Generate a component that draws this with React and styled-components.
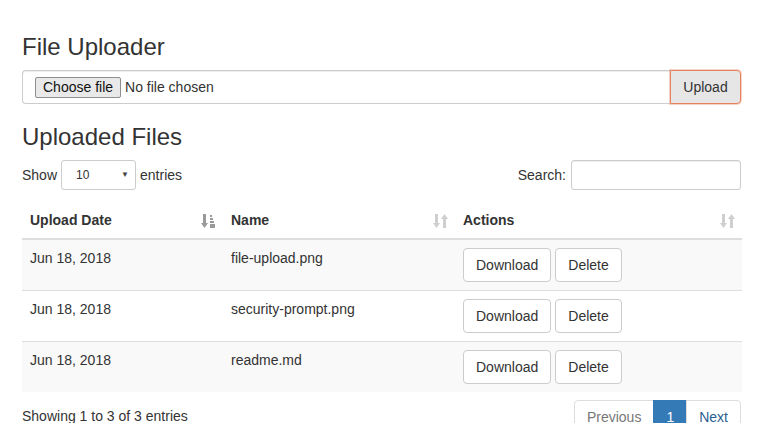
import React from "react";
import styled, { createGlobalStyle } from "styled-components";

const GlobalStyle = createGlobalStyle`
  * { box-sizing: border-box; }
  body {
    margin: 0;
    font-family: "Liberation Sans", Arial, sans-serif;
    font-size: 14px;
    line-height: 20px;
    color: #333;
    background: #fff;
  }
`;

const Page = styled.div`
  padding: 14px 21px 0 22px;
  width: 762px;
`;

const Heading = styled.h3`
  font-size: 24px;
  font-weight: 500;
  line-height: 26px;
  margin: 20px 0 10px;
`;

const InputGroup = styled.div`
  display: flex;
  height: 34px;
`;

const FileControl = styled.div`
  flex: 1;
  display: flex;
  align-items: center;
  gap: 4px;
  padding: 0 12px;
  border: 1px solid #ccc;
  border-right: none;
  border-radius: 4px 0 0 4px;
  box-shadow: inset 0 1px 1px rgba(0, 0, 0, 0.075);
`;

const ChooseButton = styled.span`
  display: inline-block;
  height: 21px;
  line-height: 19px;
  padding: 0 7px;
  font-size: 14px;
  color: #111;
  background: #e9e9e9;
  border: 1px solid #8f8f8f;
  border-radius: 2px;
`;

const UploadButton = styled.button`
  width: 71px;
  font-family: inherit;
  font-size: 14px;
  color: #333;
  background: #e6e6e6;
  border: 1px solid #e8825e;
  border-radius: 0 4px 4px 0;
  box-shadow: 0 0 0 1px rgba(232, 130, 94, 0.35);
`;

const Toolbar = styled.div`
  display: flex;
  justify-content: space-between;
  align-items: center;
  margin-top: 10px;
  height: 30px;
`;

const Label = styled.label`
  display: flex;
  align-items: center;
  gap: ${(p) => p.$gap || 4}px;
`;

const Select = styled.div`
  position: relative;
  width: 75px;
  height: 30px;
  border: 1px solid #ccc;
  border-radius: 3px;
  font-size: 12px;
  line-height: 28px;
  padding-left: 14px;
  &::after {
    content: "▼";
    position: absolute;
    right: 6px;
    top: 0;
    font-size: 8px;
    color: #444;
  }
`;

const SearchInput = styled.input`
  width: 170px;
  height: 30px;
  border: 1px solid #ccc;
  border-radius: 3px;
  box-shadow: inset 0 1px 1px rgba(0, 0, 0, 0.075);
`;

const Table = styled.table`
  width: 720px;
  margin-top: 12px;
  margin-bottom: 6px;
  border-collapse: collapse;
  table-layout: fixed;
`;

const Th = styled.th`
  position: relative;
  text-align: left;
  font-weight: bold;
  padding: 8px 30px 8px 8px;
  line-height: 20px;
  border-bottom: 2px solid #ddd;
  width: ${(p) => p.$w}px;
`;

const SortIcon = styled.svg`
  position: absolute;
  right: 7px;
  top: 12px;
`;

const Tr = styled.tr`
  background: ${(p) => (p.$striped ? "#f9f9f9" : "#fff")};
`;

const Td = styled.td`
  padding: 8px;
  line-height: 20px;
  vertical-align: top;
  border-top: 1px solid #ddd;
`;

const Actions = styled.div`
  display: flex;
  gap: 4px;
`;

const Button = styled.button`
  height: 34px;
  padding: 6px 12px;
  font-family: inherit;
  font-size: 14px;
  color: #333;
  background: #fff;
  border: 1px solid #ccc;
  border-radius: 4px;
`;

const Footer = styled.div`
  display: flex;
  justify-content: space-between;
  align-items: flex-start;
`;

const Info = styled.div`
  padding-top: 8px;
`;

const Pagination = styled.ul`
  display: flex;
  list-style: none;
  margin: 2px 0;
  padding: 0;
`;

const PageLink = styled.li`
  padding: 6px 12px;
  line-height: 20px;
  border: 1px solid ${(p) => (p.$active ? "#337ab7" : "#ddd")};
  margin-left: -1px;
  color: ${(p) => (p.$active ? "#fff" : p.$disabled ? "#777" : "#2b5f8f")};
  background: ${(p) => (p.$active ? "#337ab7" : "#fff")};
  &:first-child {
    border-radius: 4px 0 0 4px;
    margin-left: 0;
  }
  &:last-child {
    border-radius: 0 4px 4px 0;
  }
`;

function Sort({ active }) {
  const c = active ? "#9a9a9a" : "#cfcfcf";
  return (
    <SortIcon width="15" height="15" viewBox="0 0 15 15">
      <rect x="2" y="0" width="3" height="10" fill={c} />
      <path d="M0 9h7l-3.5 5z" fill={c} />
      {active ? (
        <>
          <rect x="9" y="1" width="2" height="2" fill={c} />
          <rect x="9" y="4" width="3" height="2" fill={c} />
          <rect x="9" y="7" width="4" height="2" fill={c} />
          <rect x="9" y="10" width="5" height="4" fill={c} />
        </>
      ) : (
        <>
          <rect x="10" y="4" width="3" height="10" fill={c} />
          <path d="M8 5h7l-3.5-5z" fill={c} />
        </>
      )}
    </SortIcon>
  );
}

const files = [
  { date: "Jun 18, 2018", name: "file-upload.png" },
  { date: "Jun 18, 2018", name: "security-prompt.png" },
  { date: "Jun 18, 2018", name: "readme.md" },
];

export default function App() {
  return (
    <Page>
      <GlobalStyle />
      <Heading>File Uploader</Heading>
      <InputGroup>
        <FileControl>
          <ChooseButton>Choose file</ChooseButton>
          <span>No file chosen</span>
        </FileControl>
        <UploadButton>Upload</UploadButton>
      </InputGroup>
      <Heading>Uploaded Files</Heading>
      <Toolbar>
        <Label>
          Show <Select>10</Select> entries
        </Label>
        <Label $gap={5}>
          Search: <SearchInput type="search" />
        </Label>
      </Toolbar>
      <Table>
        <thead>
          <tr>
            <Th $w={201}>
              Upload Date
              <Sort active />
            </Th>
            <Th $w={232}>
              Name
              <Sort />
            </Th>
            <Th $w={287}>
              Actions
              <Sort />
            </Th>
          </tr>
        </thead>
        <tbody>
          {files.map((f, i) => (
            <Tr key={f.name} $striped={i % 2 === 0}>
              <Td>{f.date}</Td>
              <Td>{f.name}</Td>
              <Td>
                <Actions>
                  <Button>Download</Button>
                  <Button>Delete</Button>
                </Actions>
              </Td>
            </Tr>
          ))}
        </tbody>
      </Table>
      <Footer>
        <Info>Showing 1 to 3 of 3 entries</Info>
        <Pagination>
          <PageLink $disabled>Previous</PageLink>
          <PageLink $active>1</PageLink>
          <PageLink>Next</PageLink>
        </Pagination>
      </Footer>
    </Page>
  );
}
